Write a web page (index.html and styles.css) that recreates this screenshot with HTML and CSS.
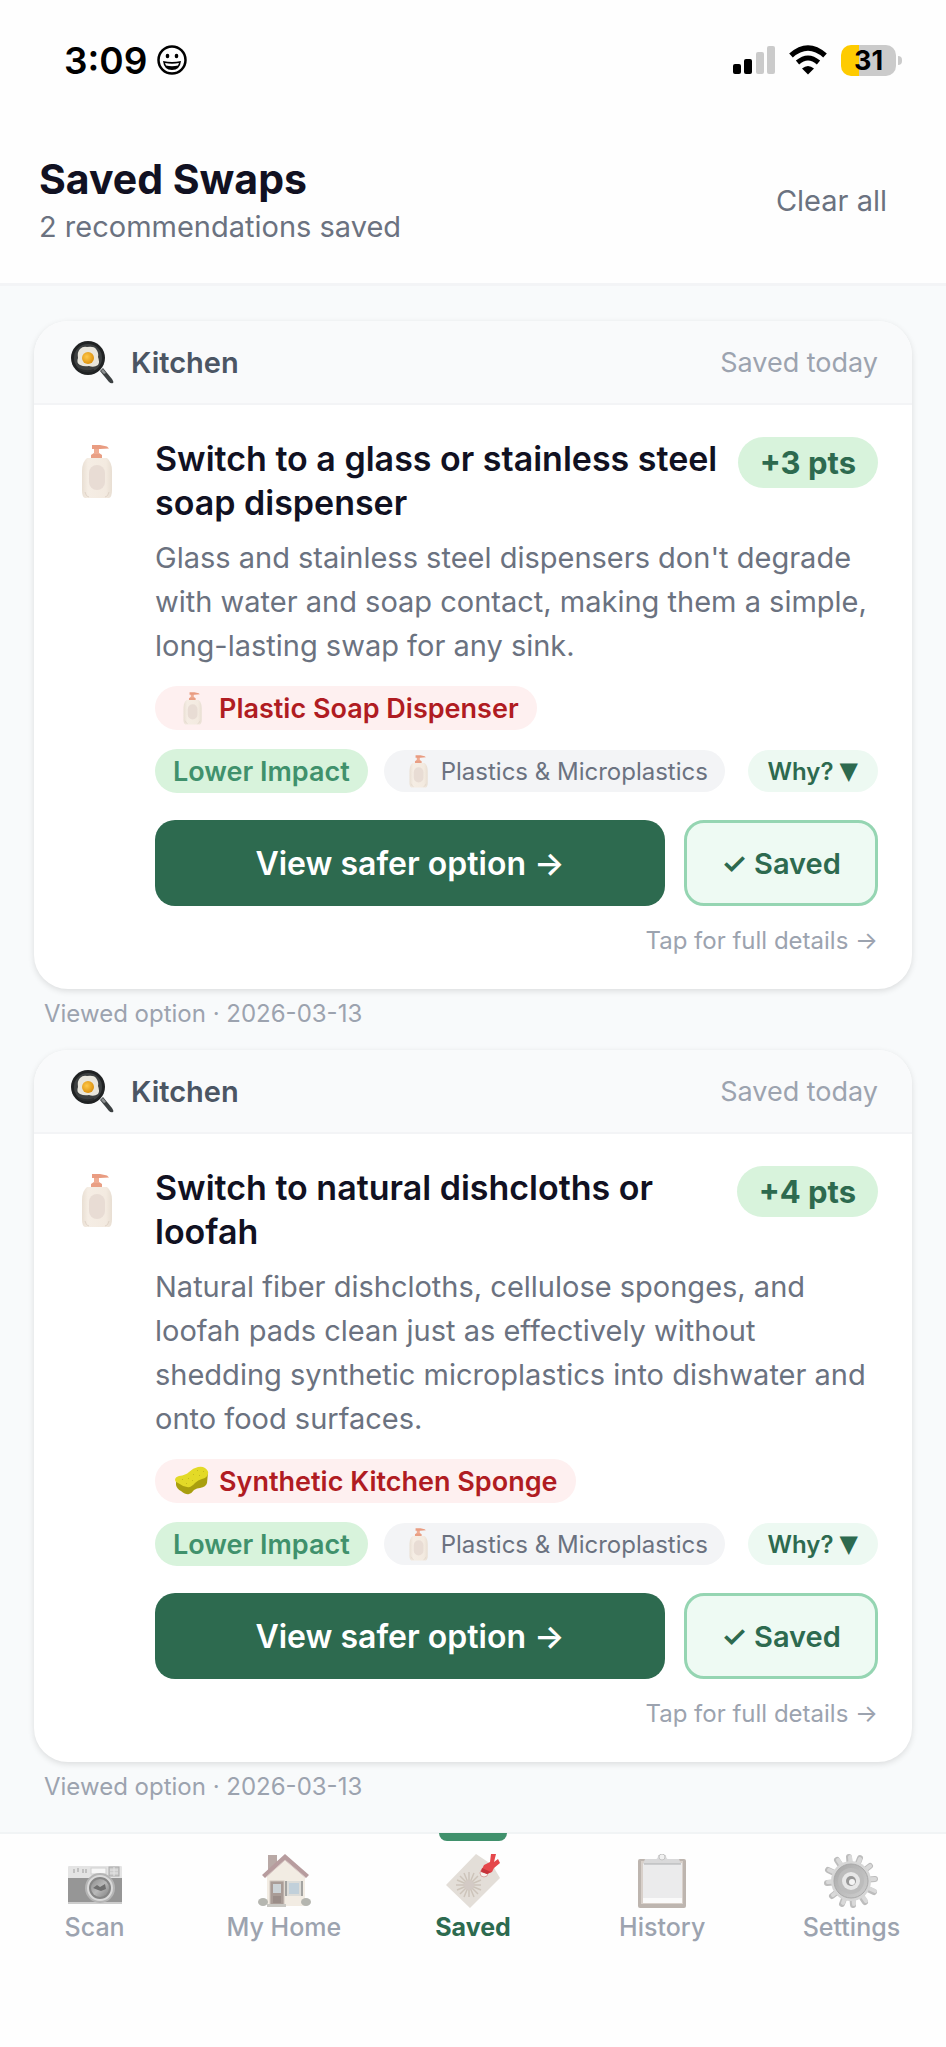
FILE: index.html
```html
<!DOCTYPE html>
<html lang="en">
<head>
  <meta charset="UTF-8">
  <meta name="viewport" content="width=device-width, initial-scale=1.0">
  <title>Saved Swaps</title>
  <link rel="stylesheet" href="styles.css">
</head>
<body>
  <!-- shared icons -->
  <svg class="sprite" aria-hidden="true">
    <defs>
      <linearGradient id="bottleFill" x1="0" y1="0" x2="1" y2="0">
        <stop offset="0" stop-color="#e9dfd3"/>
        <stop offset="0.2" stop-color="#f5ede4"/>
        <stop offset="0.8" stop-color="#f3eae0"/>
        <stop offset="1" stop-color="#e8ded2"/>
      </linearGradient>
      <radialGradient id="yolk" cx="0.4" cy="0.4" r="0.6">
        <stop offset="0" stop-color="#ffc94a"/>
        <stop offset="1" stop-color="#dd9310"/>
      </radialGradient>
      <linearGradient id="lens" x1="0" y1="0" x2="1" y2="1">
        <stop offset="0" stop-color="#8d8d8d"/>
        <stop offset="0.5" stop-color="#b9b9b9"/>
        <stop offset="1" stop-color="#838383"/>
      </linearGradient>
      <linearGradient id="gearRing" x1="0" y1="0" x2="1" y2="1">
        <stop offset="0" stop-color="#a8a8a8"/>
        <stop offset="1" stop-color="#cfcfcf"/>
      </linearGradient>
    </defs>

    <symbol id="soap" viewBox="0 0 56 56">
      <path d="M23 17v-5l3-2h5l3 2v5z" fill="#e99f84"/>
      <path d="M26 11V5h5v6z" fill="#efac93"/>
      <path d="M24 2h8l7 1.500 2 2-9 .5h-8z" fill="#e99c81"/>
      <path d="M19 15h20q5 4 5 13v19q0 7-3 8H17q-3-1-3-8V28q0-9 5-13z" fill="url(#bottleFill)"/>
      <rect x="21" y="22" width="16" height="25" rx="8" fill="#e8dcd4"/>
      <path d="M17 49q1 5 4 5M41 49q-1 5-4 5" fill="none" stroke="#e0d4c8" stroke-width="1"/>
    </symbol>

    <symbol id="pan" viewBox="0 0 43 43">
      <path d="M29 30l3-3 9 11q2 3 1 4-2 1-4-1z" fill="#3c4042"/>
      <path d="M30 30l2-2 3 4-2 1z" fill="#8c9091"/>
      <circle cx="17" cy="17" r="17" fill="#202223"/>
      <circle cx="17" cy="17" r="14" fill="#3d4041"/>
      <path d="M9 8q3-3 7-2 7-1 9 2 3 4 2 8 2 5 0 8-4 3-9 1-5 1-9-1-4-2-2-7-1-6 2-9z" fill="#e9e6dc"/>
      <circle cx="17" cy="17" r="6" fill="url(#yolk)"/>
      <path d="M8 28q7 4 15 1" fill="none" stroke="#2b2d2e" stroke-width="2"/>
    </symbol>

    <symbol id="sponge" viewBox="0 0 34 34">
      <path d="M1 15v6q1 4 5 6 5 4 8 3 3-1 5-4 3-2 6-2 6-1 7-5l1-10z" fill="#a99f0e"/>
      <path d="M0 16q0-3 4-4 7-1 10-4 4-4 9-5 4-1 7 1 4 3 3 6-1 4-6 5-4 1-7 4-4 5-8 4-5-1-9-4-3-1-3-3z" fill="#e3da27"/>
      <path d="M7 15l1 1M13 14l1 1M11 19l1 1M18 10l1 1M22 6l1 1M24 11l1 1M28 7l1 1M17 16l1 1" stroke="#c5bb1c" stroke-width="1"/>
    </symbol>

    <symbol id="camera" viewBox="0 0 54 54">
      <rect y="12" width="54" height="38" rx="1" fill="#e4e4e4"/>
      <rect y="24" width="54" height="26" fill="#969696"/>
      <rect y="48" width="54" height="2" fill="#cdcdcd"/>
      <path d="M6 15v4M10 14v4M15 15v4M18 15v4" stroke="#b5b5b5" stroke-width="1.500"/>
      <rect x="23" y="14" width="15" height="6" fill="#f7f7f7" stroke="#cfcfcf"/>
      <rect x="41" y="13" width="10" height="9" fill="#cccccc" stroke="#aaaaaa"/>
      <path d="M42 16h8M42 19h8M46 13v9" stroke="#e5e5e5"/>
      <circle cx="32" cy="34" r="15" fill="#b5b5b5"/>
      <circle cx="32" cy="34" r="12" fill="#868686" stroke="#dadada" stroke-width="2"/>
      <circle cx="32" cy="34" r="9" fill="url(#lens)"/>
      <path d="M25 34l4-3 3 2 5-3 1 5-5 2-3-1z" fill="#6f6f6f"/>
    </symbol>

    <symbol id="home" viewBox="0 0 54 54">
      <rect x="11" y="1" width="9" height="17" fill="#b9a9a6"/>
      <path d="M10 19L28 3l20 17v32H10z" fill="#f2ece3"/>
      <path d="M5 21L28 0l24 21-3 3L28 6 8 24z" fill="#b79c9e"/>
      <path d="M8 24L28 6l21 18" fill="none" stroke="#d9c8c6" stroke-width="1"/>
      <rect x="13" y="27" width="14" height="25" fill="#a99c96" stroke="#cfc5be"/>
      <rect x="16" y="30" width="8" height="9" fill="#ccd3d6"/>
      <path d="M16 42h8v7h-8z" fill="#9a8d88"/>
      <rect x="31" y="28" width="12" height="13" fill="#c1d0da" stroke="#dcdcd8" stroke-width="2"/>
      <path d="M29 27v15M45 27v15" stroke="#a3a3a1" stroke-width="2"/>
      <ellipse cx="6" cy="48" rx="5" ry="4" fill="#b5b6b0"/>
      <ellipse cx="49" cy="48" rx="5" ry="4" fill="#b5b6b0"/>
      <rect x="10" y="50" width="19" height="3" fill="#c9c8c3"/>
    </symbol>

    <symbol id="tag" viewBox="0 0 54 54">
      <path d="M0 31L30 0l18 12q0 2 3 7l3 5-30 30z" fill="#e3ded8"/>
      <g stroke="#cdc4ba" stroke-width="1.500">
        <path d="M23 18v25M10 31h25M14 22l18 18M32 22L14 40M18 19l10 24M28 19L18 43M11 26l24 10M35 26L11 36"/>
      </g>
      <circle cx="23" cy="31" r="5" fill="#d3cac5"/>
      <circle cx="38" cy="19" r="4" fill="#f6f2ee" stroke="#d8a8a3"/>
      <path d="M38 11l6-3 1-8h5l-2 8 4-3 2 4-6 5-2 4-5 2-6-3z" fill="#e5474b"/>
      <path d="M36 14l9 4-4 2-6-2z" fill="#c5343b"/>
    </symbol>

    <symbol id="clipboard" viewBox="0 0 54 54">
      <rect x="3" y="5" width="48" height="49" rx="2" fill="#bdb5af"/>
      <rect x="6" y="7" width="42" height="43" fill="#d8d0ca"/>
      <rect x="8" y="9" width="39" height="40" fill="#ebebec"/>
      <path d="M8 44h39v5H8z" fill="#fafafa"/>
      <path d="M10 5h11q2 0 2-4h8q0 4 2 4h11l2 5H8z" fill="#d9d9da"/>
      <path d="M9 10h37" stroke="#aeb0b2" stroke-width="1"/>
      <circle cx="27" cy="3" r="3" fill="#f1f1f1" stroke="#c4c4c4"/>
    </symbol>

    <symbol id="gear" viewBox="0 0 54 54">
      <g stroke="#bdbdbd" stroke-width="6" stroke-linecap="round">
        <path d="M25 3l4 48M13 6l28 42M4 16l46 22M3 29l48-4M8 42l38-30M18 50L36 4"/>
      </g>
      <g stroke="#d9d9d9" stroke-width="4" stroke-linecap="round">
        <path d="M26 3l4 47M14 6l28 41M5 16l46 21M4 28l47-3M9 41l37-29M19 49L36 5"/>
      </g>
      <circle cx="27" cy="27" r="20" fill="#d6d6d6"/>
      <circle cx="27" cy="27" r="17" fill="url(#gearRing)" stroke="#a9a9a9"/>
      <circle cx="27" cy="27" r="13" fill="#bcbcbc"/>
      <circle cx="27" cy="27" r="9" fill="#e8e8e8"/>
      <circle cx="27" cy="27" r="5" fill="#999999"/>
      <circle cx="28" cy="28" r="3" fill="#f4f4f4"/>
    </symbol>
  </svg>

  <div class="status-bar">
    <div class="status-left">
      <span class="time">3:09</span>
      <svg class="smiley" viewBox="0 0 30 30" aria-hidden="true">
        <circle cx="15" cy="15" r="13.500" fill="none" stroke="#000" stroke-width="2.500"/>
        <ellipse cx="10.500" cy="11" rx="1.800" ry="2.200"/>
        <ellipse cx="19.500" cy="11" rx="1.800" ry="2.200"/>
        <path d="M6 16q9 2 18 0-1 9-9 9t-9-9z"/>
        <path d="M8 18q7 1.500 14 0l-1 2.500q-6 1.500-12 0z" fill="#fff"/>
      </svg>
    </div>
    <div class="status-right">
      <svg class="signal" viewBox="0 0 42 30" aria-hidden="true">
        <rect x="0" y="19" width="8" height="10" rx="2"/>
        <rect x="11" y="14" width="8" height="15" rx="2"/>
        <rect x="23" y="7" width="8" height="22" rx="2" fill="#cbcbcb"/>
        <rect x="34" y="1" width="8" height="28" rx="2" fill="#cbcbcb"/>
      </svg>
      <svg class="wifi" viewBox="0 0 40 30" aria-hidden="true">
        <path d="M3 10.500q17-15 34 0" fill="none" stroke="#000" stroke-width="5.500"/>
        <path d="M9.500 17.500q10.500-9 21 0" fill="none" stroke="#000" stroke-width="5"/>
        <path d="M14 23.500q6-5 12 0l-6 6z"/>
      </svg>
      <div class="battery"><span>31</span></div>
    </div>
  </div>

  <header class="header">
    <div>
      <h1>Saved Swaps</h1>
      <p>2 recommendations saved</p>
    </div>
    <button class="clear-btn">Clear all</button>
  </header>

  <main class="list">
    <article class="item">
      <div class="card">
        <div class="card-header">
          <svg class="room-icon"><use href="#pan"/></svg>
          <span class="room">Kitchen</span>
          <span class="saved-date">Saved today</span>
        </div>
        <div class="card-body">
          <svg class="swap-icon"><use href="#soap"/></svg>
          <div class="content">
            <div class="title-row">
              <h2>Switch to a glass or stainless steel soap dispenser</h2>
              <span class="points">+3 pts</span>
            </div>
            <p class="desc">Glass and stainless steel dispensers don't degrade with water and soap contact, making them a simple, long-lasting swap for any sink.</p>
            <div class="replaces"><svg class="chip-icon"><use href="#soap"/></svg>Plastic Soap Dispenser</div>
            <div class="chips">
              <span class="chip impact">Lower Impact</span>
              <span class="chip category"><svg class="chip-icon"><use href="#soap"/></svg>Plastics &amp; Microplastics</span>
              <button class="chip why">Why? <span class="caret">▼</span></button>
            </div>
            <div class="actions">
              <button class="view-btn">View safer option →</button>
              <button class="saved-btn">✓ Saved</button>
            </div>
            <a class="details" href="#">Tap for full details →</a>
          </div>
        </div>
      </div>
      <p class="viewed">Viewed option · 2026-03-13</p>
    </article>

    <article class="item">
      <div class="card">
        <div class="card-header">
          <svg class="room-icon"><use href="#pan"/></svg>
          <span class="room">Kitchen</span>
          <span class="saved-date">Saved today</span>
        </div>
        <div class="card-body">
          <svg class="swap-icon"><use href="#soap"/></svg>
          <div class="content">
            <div class="title-row">
              <h2>Switch to natural dishcloths or loofah</h2>
              <span class="points">+4 pts</span>
            </div>
            <p class="desc">Natural fiber dishcloths, cellulose sponges, and loofah pads clean just as effectively without shedding synthetic microplastics into dishwater and onto food surfaces.</p>
            <div class="replaces"><svg class="chip-icon"><use href="#sponge"/></svg>Synthetic Kitchen Sponge</div>
            <div class="chips">
              <span class="chip impact">Lower Impact</span>
              <span class="chip category"><svg class="chip-icon"><use href="#soap"/></svg>Plastics &amp; Microplastics</span>
              <button class="chip why">Why? <span class="caret">▼</span></button>
            </div>
            <div class="actions">
              <button class="view-btn">View safer option →</button>
              <button class="saved-btn">✓ Saved</button>
            </div>
            <a class="details" href="#">Tap for full details →</a>
          </div>
        </div>
      </div>
      <p class="viewed">Viewed option · 2026-03-13</p>
    </article>
  </main>

  <nav class="tab-bar">
    <a class="tab" href="#"><svg><use href="#camera"/></svg>Scan</a>
    <a class="tab" href="#"><svg><use href="#home"/></svg>My Home</a>
    <a class="tab active" href="#"><svg><use href="#tag"/></svg>Saved</a>
    <a class="tab" href="#"><svg><use href="#clipboard"/></svg>History</a>
    <a class="tab" href="#"><svg><use href="#gear"/></svg>Settings</a>
  </nav>
</body>
</html>
```
FILE: styles.css
```css
* {
  box-sizing: border-box;
}
body {
  display: flex;
  flex-direction: column;
  min-height: 100vh;
  margin: 0;
  background: #f8fafb;
  color: #111122;
  font-family: Inter, "Liberation Sans", sans-serif;
}
h1, h2, p {
  margin: 0;
}
button {
  border: none;
  font-family: inherit;
  cursor: pointer;
}
a {
  text-decoration: none;
}
.sprite {
  position: absolute;
  width: 0;
  height: 0;
}

/* status bar */
.status-bar {
  display: flex;
  justify-content: space-between;
  align-items: center;
  height: 120px;
  padding: 0 45px 0 64px;
  background: #fefefe;
  color: #000;
}
.status-left {
  display: flex;
  align-items: center;
  gap: 10px;
}
.time {
  font-size: 37px;
  font-weight: 600;
}
.smiley {
  width: 30px;
  height: 30px;
}
.status-right {
  display: flex;
  align-items: center;
  gap: 13px;
}
.signal {
  width: 42px;
  height: 30px;
}
.wifi {
  width: 40px;
  height: 30px;
}
.battery {
  position: relative;
  width: 55px;
  height: 31px;
  margin-right: 5px;
  border-radius: 10px;
  background: linear-gradient(90deg, #fecb00 18px, #cbcbcb 18px);
  font-size: 27px;
  font-weight: 700;
  line-height: 31px;
  text-align: center;
}
.battery::after {
  content: "";
  position: absolute;
  top: 11px;
  right: -6px;
  width: 4px;
  height: 9px;
  border-radius: 0 4px 4px 0;
  background: #cbcbcb;
}

/* page header */
.header {
  display: flex;
  justify-content: space-between;
  align-items: center;
  height: 166px;
  padding: 0 39px 2px;
  border-bottom: 3px solid #f3f4f6;
  background: #fefefe;
}
.header h1 {
  font-size: 41px;
  font-weight: 700;
  line-height: 52px;
}
.header p {
  color: #6b7280;
  font-size: 29px;
  line-height: 44px;
}
.clear-btn {
  padding: 10px 20px;
  background: none;
  color: #6b7280;
  font-size: 29px;
}

/* cards */
.list {
  display: flex;
  flex-direction: column;
  gap: 18px;
  padding: 35px 34px 27px;
}
.card {
  border-radius: 34px;
  background: #fff;
  box-shadow: 0 2px 6px rgba(0, 0, 0, 0.12);
  overflow: hidden;
}
.card-header {
  display: flex;
  align-items: center;
  height: 84px;
  padding: 0 34px;
  border-bottom: 2px solid #f3f4f6;
  background: #f9fafb;
}
.room-icon {
  width: 43px;
  height: 43px;
  margin: 0 17px 0 3px;
}
.room {
  flex: 1;
  color: #4b5563;
  font-size: 29px;
  font-weight: 600;
}
.saved-date {
  color: #9ca3af;
  font-size: 27px;
}
.card-body {
  display: flex;
  gap: 31px;
  padding: 32px 34px 30px;
}
.swap-icon {
  flex: none;
  width: 56px;
  height: 56px;
  margin-top: 6px;
}
.content {
  flex: 1;
  min-width: 0;
}
.title-row {
  display: flex;
  justify-content: space-between;
  align-items: flex-start;
  gap: 16px;
}
.title-row h2 {
  font-size: 34px;
  font-weight: 600;
  line-height: 44px;
}
.points {
  flex: none;
  padding: 0 22px;
  border-radius: 26px;
  background: #d8f3dc;
  color: #2d6a4f;
  font-size: 31px;
  font-weight: 700;
  line-height: 51px;
}
.desc {
  margin-top: 11px;
  color: #6b7280;
  font-size: 29px;
  line-height: 44px;
}
.chip-icon {
  flex: none;
  width: 34px;
  height: 34px;
}
.replaces {
  display: flex;
  align-items: center;
  gap: 10px;
  width: fit-content;
  height: 44px;
  margin-top: 18px;
  padding: 0 18px 0 20px;
  border-radius: 22px;
  background: #fef0f0;
  color: #b01c22;
  font-size: 27px;
  font-weight: 600;
}
.chips {
  display: flex;
  align-items: center;
  gap: 16px;
  margin-top: 19px;
}
.chip {
  display: flex;
  align-items: center;
  gap: 6px;
  height: 42px;
  padding: 0 17px;
  border-radius: 22px;
  font-size: 24px;
  white-space: nowrap;
}
.impact {
  height: 44px;
  padding: 0 18px;
  background: #d8f3dc;
  color: #40916c;
  font-size: 27px;
  font-weight: 600;
}
.category {
  background: #f3f4f6;
  color: #6b7280;
}
.why {
  margin-left: auto;
  padding: 0 20px;
  background: #edf9f2;
  color: #2d6a4f;
  font-weight: 600;
}
.caret {
  font-family: "DejaVu Sans", sans-serif;
  font-size: 24px;
}
.actions {
  display: flex;
  gap: 19px;
  margin-top: 27px;
}
.actions button {
  height: 86px;
  border-radius: 20px;
  font-weight: 600;
}
.view-btn {
  flex: 1;
  background: #2d6a4f;
  color: #fff;
  font-size: 32px;
}
.saved-btn {
  width: 194px;
  border: 3px solid #95d5b2;
  background: #eefaf3;
  color: #2d6a4f;
  font-size: 29px;
}
.details {
  display: block;
  margin-top: 17px;
  color: #9ca3af;
  font-size: 24px;
  line-height: 36px;
  text-align: right;
}
.viewed {
  padding: 7px 10px 0;
  color: #9ca3af;
  font-size: 24px;
  line-height: 36px;
}

/* bottom tabs */
.tab-bar {
  display: flex;
  flex: 1;
  border-top: 2px solid #f1f4f5;
  background: #fefefe;
}
.tab {
  position: relative;
  display: flex;
  flex: 1;
  flex-direction: column;
  align-items: center;
  gap: 3px;
  padding-top: 20px;
  color: #9ca3af;
  font-size: 25px;
  font-weight: 500;
  line-height: 32px;
}
.tab svg {
  width: 54px;
  height: 54px;
}
.tab.active {
  color: #2d6a4f;
  font-weight: 700;
}
.tab.active::before {
  content: "";
  position: absolute;
  top: -1px;
  width: 68px;
  height: 8px;
  border-radius: 0 0 8px 8px;
  background: #40916c;
}
```
